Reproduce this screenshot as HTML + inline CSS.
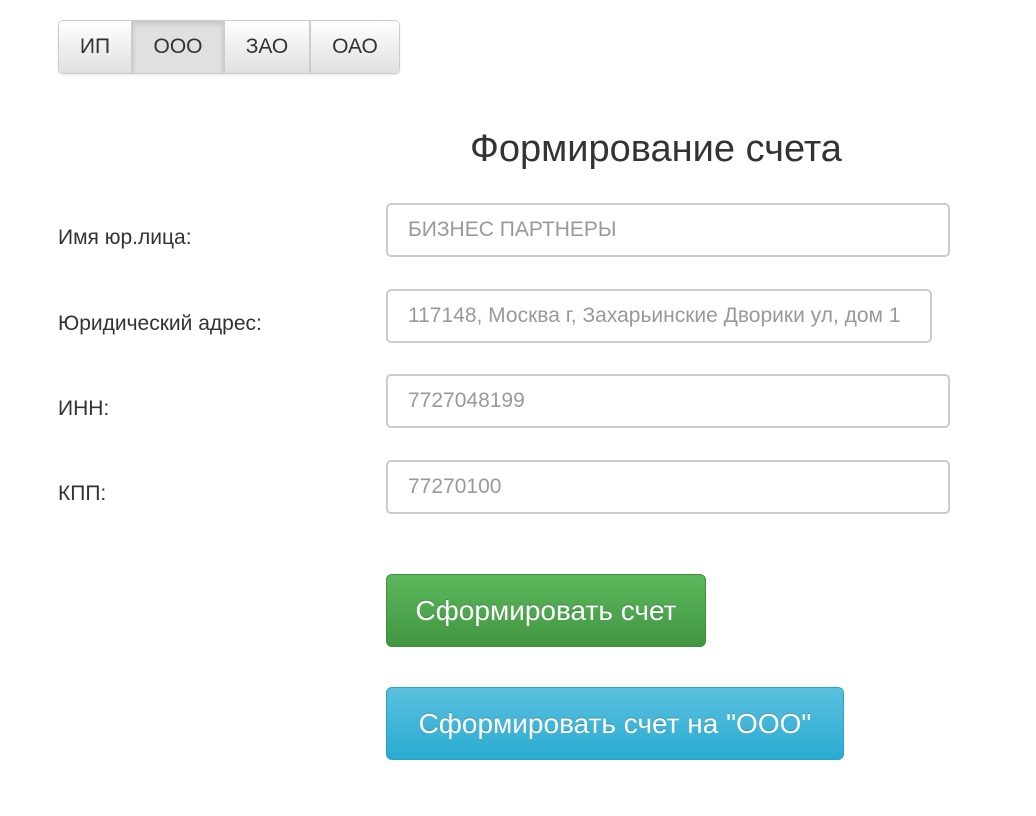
<!DOCTYPE html>
<html><head><meta charset="utf-8"><style>
body{margin:0;width:1036px;height:816px;background:#fff;font-family:"Liberation Sans",sans-serif;color:#333;position:relative;overflow:hidden}
.grp{position:absolute;left:58px;top:20px;height:52px;display:flex;border:1px solid #ccc;border-radius:5px;overflow:hidden;box-shadow:0 1px 2px rgba(0,0,0,.1)}
.grp div{height:52px;line-height:52px;font-size:21px;text-align:center;background:linear-gradient(#fff,#e0e0e0);border-left:2px solid #ccc;color:#333}
.grp div:first-child{border-left:none}
.grp .act{background:#e0e0e0;box-shadow:inset 0 3px 5px rgba(0,0,0,.125)}
h1{position:absolute;left:470px;top:128px;margin:0;font-weight:normal;font-size:38px;color:#333}
.lbl{position:absolute;left:58px;font-size:21px;color:#333}
.inp{position:absolute;left:386px;width:520px;height:50px;border:2px solid #ccc;border-radius:5px;box-sizing:content-box;font-size:21px;color:#999;line-height:50px;padding:0 20px;white-space:nowrap;overflow:hidden}
.btn{position:absolute;left:386px;border-radius:6px;color:#fff;font-size:28px;text-align:center;text-shadow:0 -1px 0 rgba(0,0,0,.2);box-sizing:border-box}
</style></head><body>
<div class="grp">
<div style="width:72px">ИП</div>
<div class="act" style="width:90px">ООО</div>
<div style="width:84px">ЗАО</div>
<div style="width:88px">ОАО</div>
</div>
<h1>Формирование счета</h1>
<div class="lbl" style="top:226px">Имя юр.лица:</div>
<div class="lbl" style="top:312px">Юридический адрес:</div>
<div class="lbl" style="top:397px">ИНН:</div>
<div class="lbl" style="top:482px">КПП:</div>
<div class="inp" style="top:203px">БИЗНЕС ПАРТНЕРЫ</div>
<div class="inp" style="top:289px;width:502px">117148, Москва г, Захарьинские Дворики ул, дом 1</div>
<div class="inp" style="top:374px">7727048199</div>
<div class="inp" style="top:460px">77270100</div>
<div class="btn" style="top:574px;width:320px;height:73px;line-height:71px;background:linear-gradient(#5cb85c,#419641);border:1px solid #3e8f3e">Сформировать счет</div>
<div class="btn" style="top:687px;width:458px;height:73px;line-height:71px;background:linear-gradient(#5bc0de,#2aabd2);border:1px solid #28a4c9">Сформировать счет на "ООО"</div>
</body></html>
